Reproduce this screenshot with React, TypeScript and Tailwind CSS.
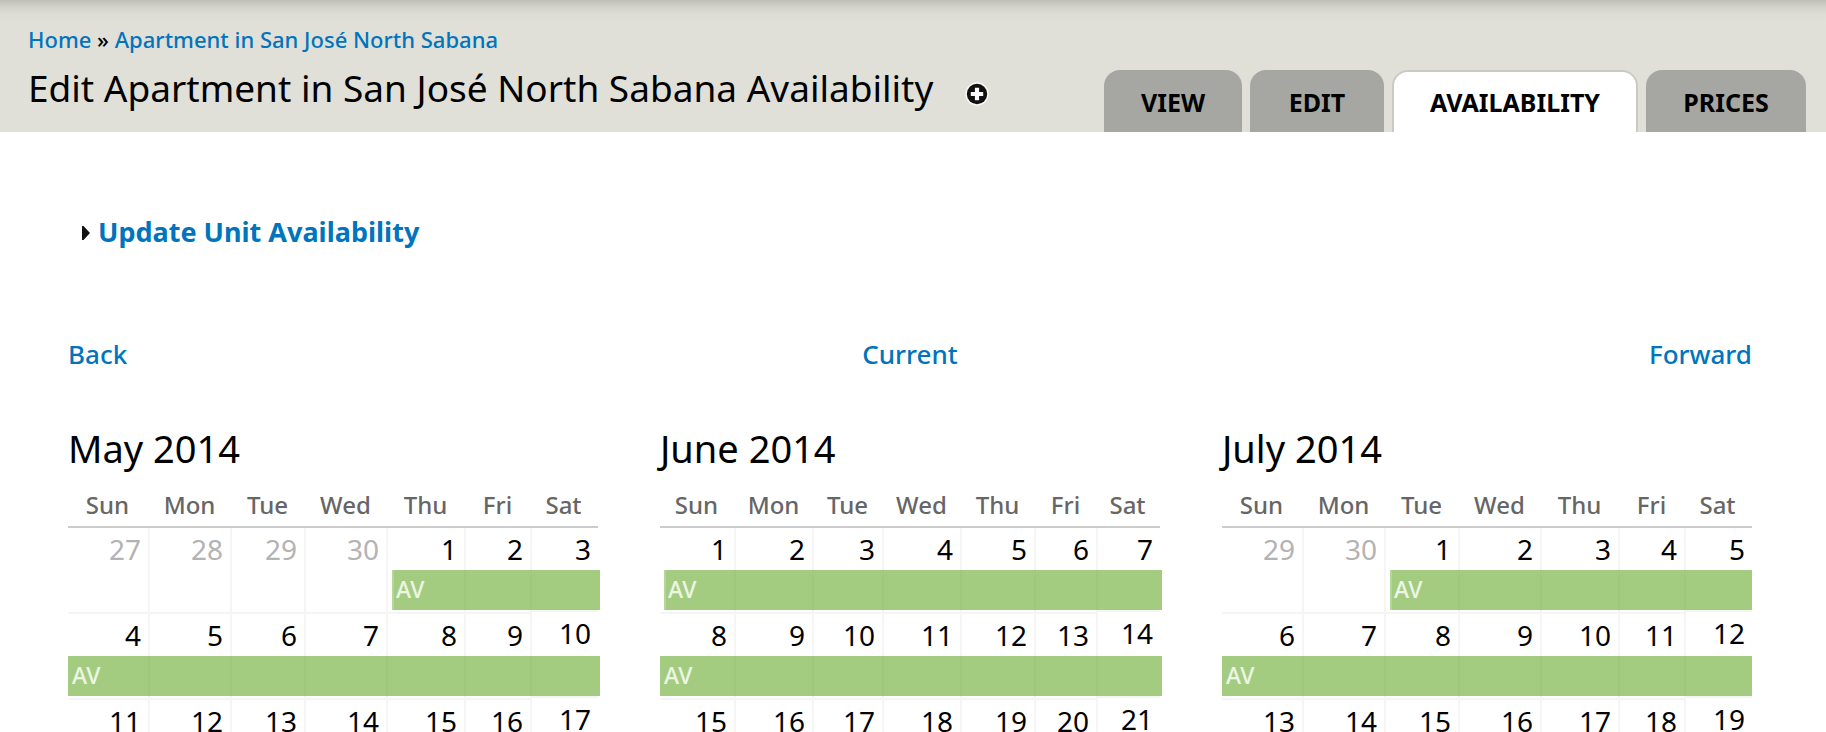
import React from "react";
import clsx from "clsx";

type Day = { n: number; other?: boolean; start?: boolean; booked?: boolean };
type Month = { title: string; cols: string[]; weeks: Day[][]; flush?: boolean };

const WEEKDAYS = ["Sun", "Mon", "Tue", "Wed", "Thu", "Fri", "Sat"];
const WIDE = ["w-[82px]", "w-[82px]", "w-[74px]", "w-[82px]", "w-[78px]", "w-[66px]", "w-[66px]"];
const NARROW = ["w-[76px]", "w-[78px]", "w-[70px]", "w-[78px]", "w-[74px]", "w-[62px]", "w-[62px]"];

/** Three weeks of days; `leading` holds the days shown from the previous month. */
function weeksFrom(leading: number[]): Day[][] {
  const days: Day[] = leading.map((n) => ({ n, other: true }));
  for (let n = 1; days.length < 21; n++) days.push({ n, booked: true, start: n === 1 });
  return [days.slice(0, 7), days.slice(7, 14), days.slice(14, 21)];
}

/** `flush` ends the availability bars at the table's edge instead of just past it. */
const MONTHS: Month[] = [
  { title: "May 2014", cols: WIDE, weeks: weeksFrom([27, 28, 29, 30]) },
  { title: "June 2014", cols: NARROW, weeks: weeksFrom([]) },
  { title: "July 2014", cols: WIDE, weeks: weeksFrom([29, 30]), flush: true },
];

const TABS = [
  { label: "VIEW", width: "w-[138px]" },
  { label: "EDIT", width: "w-[134px]" },
  { label: "AVAILABILITY", width: "w-[246px]", active: true },
  { label: "PRICES", width: "w-[160px]" },
];

function Calendar({ month }: { month: Month }) {
  return (
    <section className="min-w-0">
      <h2 className="text-[38px] leading-[48px]">{month.title}</h2>
      <table className="w-full table-fixed border-separate border-spacing-0">
        <colgroup>
          {month.cols.map((w, i) => (
            <col key={i} className={w} />
          ))}
        </colgroup>
        <thead>
          <tr>
            {WEEKDAYS.map((d) => (
              <th
                key={d}
                scope="col"
                className="border-b-2 border-[#cccccc] pt-[17px] pr-[3px] pb-[5px] pl-0 text-center text-[24px] leading-[32px] font-medium text-[#666666]"
              >
                {d}
              </th>
            ))}
          </tr>
        </thead>
        <tbody>
          {month.weeks.map((week, w) => (
            <tr key={w}>
              {week.map((day, d) => {
                const last = d === 6;
                const label = day.start || (d === 0 && day.booked);
                return (
                  <td key={d} className={clsx("h-[86px] p-0 align-top", !last && "border-r-2 border-[#f5f5f5]")}>
                    <div className={clsx("border-b-2 border-[#f5f5f5]", last ? "h-[84px]" : "h-[86px]")}>
                      <div
                        className={clsx(
                          "h-[42px] pr-[7px] text-right text-[28px] leading-[34px]",
                          last && w > 0 ? "pt-[2px]" : "pt-[4px]",
                          day.other ? "text-[#b3b3b3]" : "text-black",
                        )}
                      >
                        {day.n}
                      </div>
                      {day.booked && (
                        <div
                          className={clsx(
                            "h-[40px] bg-[#67aa2b]/60 text-[23px] leading-[38px] font-medium text-white/80",
                            !(last && month.flush) && "-mr-[2px]",
                            day.start ? "ml-[4px] border-l-2 border-white/20 pl-[2px]" : "pl-[4px]",
                          )}
                        >
                          {label ? "AV" : null}
                        </div>
                      )}
                    </div>
                  </td>
                );
              })}
            </tr>
          ))}
        </tbody>
      </table>
    </section>
  );
}

export default function App() {
  return (
    <div className="h-screen overflow-hidden bg-white font-['Noto_Sans',sans-serif] text-black">
      <header className="flex items-end justify-between bg-[#e0e0d8] bg-[linear-gradient(to_bottom,#bfbfb8_0px,#d2d2ca_7px,#dcdcd4_14px,#e0e0d8_22px)] pr-[20px] pl-[28px]">
        <div className="pt-[25px] pb-[20px]">
          <nav aria-label="Breadcrumb" className="text-[22px] leading-[28px] font-medium">
            <a href="#home" className="text-[#0074bd]">Home</a> » <a href="#unit" className="text-[#0074bd]">Apartment in San José North Sabana</a>
          </nav>
          <div className="mt-[11px] flex items-center gap-[28px]">
            <h1 className="text-[37px] leading-[48px]">Edit Apartment in San José North Sabana Availability</h1>
            <button type="button" aria-label="Add to shortcuts" className="pt-[12px] pl-[4px]">
              <svg className="block h-[24px] w-[24px]" viewBox="0 0 24 24">
                <circle cx="12" cy="12" r="11.7" fill="#fff" opacity="0.8" />
                <circle cx="12" cy="12" r="10.2" fill="#111" />
                <path d="M9.9 5.8h4.2v4.1h4.1v4.2h-4.1v4.1H9.9v-4.1H5.8V9.9h4.1z" fill="#fff" />
              </svg>
            </button>
          </div>
        </div>
        <nav aria-label="Tabs" className="flex gap-[8px]">
          {TABS.map((t) => (
            <a
              key={t.label}
              href={`#${t.label.toLowerCase()}`}
              className={clsx(
                "flex h-[62px] justify-center rounded-t-[16px] text-[25px] leading-[32px] font-bold",
                t.width,
                t.active ? "border-2 border-b-0 border-[#c9cac3] bg-white pt-[14px]" : "bg-[#a6a7a2] pt-[16px]",
              )}
            >
              {t.label}
            </a>
          ))}
        </nav>
      </header>
      <main className="pt-[84px] pr-[74px] pl-[68px]">
        <button type="button" className="ml-[14px] flex items-center gap-[8px] text-[27px] leading-[32px] font-bold text-[#0074bd]">
          <svg className="mt-[2px] h-[14px] w-[8px]" viewBox="0 0 8 14">
            <path d="M0 0h1.500L8 7l-6.500 7H0z" fill="#111" />
          </svg>
          Update Unit Availability
        </button>
        <nav aria-label="Months" className="mt-[88px] grid grid-cols-3 text-[26px] leading-[36px] font-medium text-[#0074bd]">
          <a href="#back" className="justify-self-start">Back</a>
          <a href="#current" className="justify-self-center">Current</a>
          <a href="#forward" className="justify-self-end">Forward</a>
        </nav>
        <div className="mt-[52px] grid grid-cols-[530fr_500fr_530fr] gap-[62px]">
          {MONTHS.map((m) => (
            <Calendar key={m.title} month={m} />
          ))}
        </div>
      </main>
    </div>
  );
}
